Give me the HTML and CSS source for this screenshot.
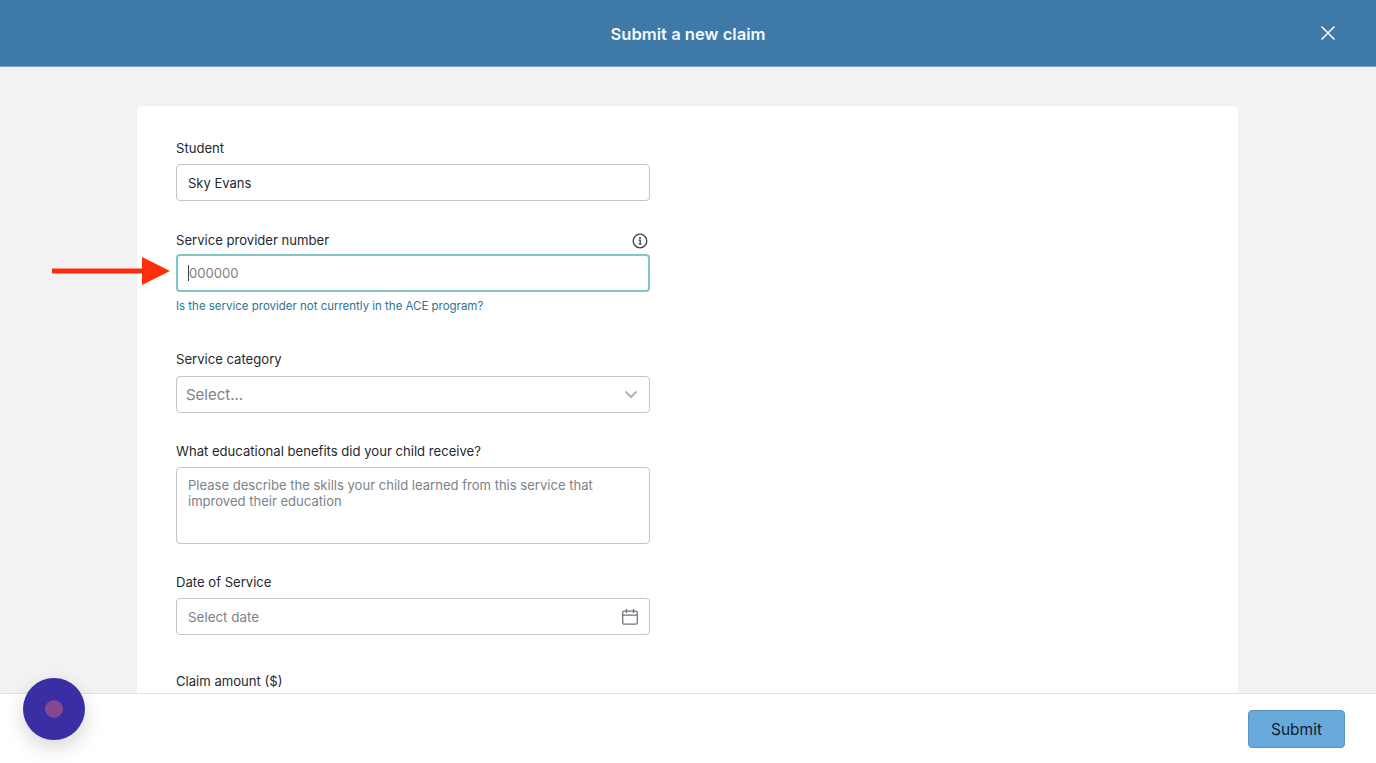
FILE: index.html
```html
<!DOCTYPE html>
<html lang="en">
<head>
<meta charset="utf-8">
<title>Submit a new claim</title>
<link rel="stylesheet" href="styles.css">
</head>
<body>
<div class="page">
  <header class="topbar">
    <h1 class="title">Submit a new claim</h1>
    <button class="close" aria-label="Close">
      <svg width="16" height="16" viewBox="0 0 16 16"><path d="M1.500 1.500l13 13M14.500 1.500l-13 13" stroke="#fff" stroke-width="1.500" fill="none"/></svg>
    </button>
  </header>
  <main class="content">
    <form class="card">
      <div class="field f-student">
        <div class="label-row"><label class="label">Student</label></div>
        <div class="input"><span class="value">Sky Evans</span></div>
      </div>
      <div class="field f-provider">
        <div class="label-row">
          <label class="label">Service provider number</label>
          <svg class="info" width="16" height="16" viewBox="0 0 16 16"><circle cx="8" cy="8" r="6.800" fill="none" stroke="#3b4149" stroke-width="1.300"/><circle cx="8" cy="4.900" r="1" fill="#3b4149"/><path d="M6.800 7.200H8.200V11M6.800 11.200H9.400" fill="none" stroke="#3b4149" stroke-width="1.300"/></svg>
        </div>
        <div class="input focused"><span class="caret"></span><span class="placeholder">000000</span></div>
        <a class="hint">Is the service provider not currently in the ACE program?</a>
      </div>
      <div class="field f-category">
        <div class="label-row"><label class="label">Service category</label></div>
        <div class="input select"><span class="select-text">Select...</span>
          <svg width="14" height="9" viewBox="0 0 14 9"><path d="M1.500 1.500L7 7l5.500-5.500" fill="none" stroke="#b5b5b5" stroke-width="2"/></svg>
        </div>
      </div>
      <div class="field f-benefits">
        <div class="label-row"><label class="label">What educational benefits did your child receive?</label></div>
        <div class="input area"><span class="placeholder">Please describe the skills your child learned from this service that improved their education</span></div>
      </div>
      <div class="field f-date">
        <div class="label-row"><label class="label">Date of Service</label></div>
        <div class="input date"><span class="placeholder">Select date</span>
          <svg width="18" height="18" viewBox="0 0 18 18"><rect x="1.700" y="3.200" width="14.600" height="13" rx="1.500" fill="none" stroke="#6d7480" stroke-width="1.300"/><path d="M1.700 7.200h14.600M5.500 1v4M12.500 1v4" fill="none" stroke="#6d7480" stroke-width="1.300"/></svg>
        </div>
      </div>
      <div class="field f-amount">
        <div class="label-row"><label class="label">Claim amount ($)</label></div>
      </div>
    </form>
  </main>
  <footer class="bottombar">
    <button class="submit" type="button">Submit</button>
  </footer>
</div>
<svg class="arrow" width="120" height="32" viewBox="0 0 120 32"><path d="M0 13.500H90V2L118 16 90 30V18.500H0z" fill="#ff2d0a"/></svg>
<div class="bubble"><span class="bubble-dot"></span></div>
</body>
</html>
```
FILE: styles.css
```css
* { box-sizing: border-box; }
html, body { margin: 0; height: 100%; overflow: hidden; }
body { font-family: Inter, "Liberation Sans", sans-serif; color: #24292f; background: #f2f2f2; position: relative; }
.page { display: flex; flex-direction: column; height: 763px; }
.topbar { height: 67px; flex: none; background: #3e79a8; display: flex; align-items: center; justify-content: center; position: relative; border-bottom: 1px solid #7ba3c4; padding-top: 2px; }
.title { margin: 0; font-size: 16.600px; font-weight: 600; color: #f4f8fb; }
.close { position: absolute; right: 40px; top: 25px; width: 16px; height: 16px; padding: 0; border: 0; background: none; display: flex; }
.content { flex: 1; min-height: 0; overflow: hidden; padding: 39px 138px 0 137px; }
.card { background: #fff; border-radius: 4px; padding: 33px 38px 40px 39px; min-height: 700px; }
.field { width: 474px; }
.f-provider { margin-top: 30px; }
.f-category { margin-top: 36px; }
.f-benefits { margin-top: 29px; }
.f-date { margin-top: 29px; }
.f-amount { margin-top: 37px; }
.label-row { display: flex; justify-content: space-between; align-items: center; height: 18px; margin-bottom: 7px; }
.f-provider .label-row { margin-bottom: 5px; }
.f-category .label-row { margin-bottom: 8px; }
.label { font-size: 13.100px; color: #24292f; line-height: 18px; }
.info { margin: 1px 2px 0 0; }
.input { height: 37px; border: 1px solid #c4c6c9; border-radius: 4px; background: #fff; padding: 0 11px; display: flex; align-items: center; font-size: 13.400px; }
.value { color: #24292f; font-size: 13px; }
.placeholder { color: #7d8287; }
.focused { height: 38px; border: 2px solid #85c4c4; padding: 0 10px; position: relative; }
.caret { width: 1px; height: 16px; background: #3a3f45; position: relative; }
.focused .placeholder { font-size: 13.100px; }
.hint { display: block; margin-top: 6px; font-size: 11.480px; line-height: 16px; color: #2f7390; }
.select { justify-content: space-between; padding: 0 11px 0 9px; height: 37px; }
.select-text { font-size: 15px; color: #7d8287; }
.area { height: 77px; align-items: flex-start; padding-top: 9px; line-height: 16px; font-size: 13.050px; }
.date { justify-content: space-between; padding-right: 10px; }
.bottombar { height: 70px; flex: none; background: #fff; border-top: 1px solid #e2e2e2; display: flex; align-items: center; justify-content: flex-end; padding: 0 31px 0 0; position: relative; }
.submit { width: 97px; height: 38px; margin-top: 1px; background: #68a9dc; border: 1px solid #5b93bf; border-radius: 4px; font-family: inherit; font-size: 15.500px; color: #0e2036; }
.arrow { position: absolute; left: 52px; top: 255px; }
.bubble { position: absolute; left: 23px; top: 678px; width: 62px; height: 62px; border-radius: 50%; background: #3a2ea5; display: flex; align-items: center; justify-content: center; box-shadow: 0 8px 20px rgba(0,0,0,0.16); }
.bubble-dot { width: 18px; height: 18px; border-radius: 50%; background: #84488f; }
```
